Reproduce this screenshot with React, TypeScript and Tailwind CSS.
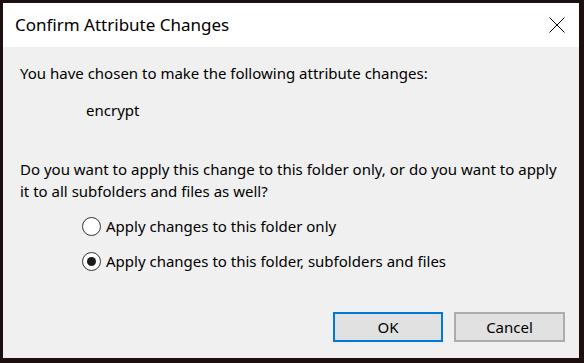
import { useState } from "react";

const font = { fontFamily: '"Noto Sans", "Liberation Sans", sans-serif' };

function Radio({ checked }: { checked: boolean }) {
  return (
    <span className="flex h-[19px] w-[19px] shrink-0 items-center justify-center rounded-full border border-[#333333] bg-white">
      {checked ? <span className="h-[9px] w-[9px] rounded-full bg-[#1a1a1a]" /> : null}
    </span>
  );
}

export default function App() {
  const [choice, setChoice] = useState<"folder" | "all">("all");

  return (
    <div
      className="flex h-[363px] w-[584px] flex-col border-t-[3px] border-r-[5px] border-b-[5px] border-l-[3px] border-[#1c0f10] text-black"
      style={font}
    >
      <div className="flex h-[44px] shrink-0 items-center justify-between bg-white pl-[12px] pr-[14px]">
        <span className="text-[17px]">Confirm Attribute Changes</span>
        <svg width="16" height="16" viewBox="0 0 16 16" className="text-black">
          <path d="M0.5 0.5 L15.5 15.5 M15.5 0.5 L0.5 15.5" stroke="currentColor" strokeWidth="1" />
        </svg>
      </div>

      <div className="flex flex-1 flex-col bg-[#f0f0f0] pt-[15px] pr-[14px] pl-[17px] text-[15px] leading-[22px]">
        <p>You have chosen to make the following attribute changes:</p>
        <p className="mt-[15px] pl-[66px]">encrypt</p>

        <p className="mt-[37px]">
          Do you want to apply this change to this folder only, or do you want to apply
          <br />
          it to all subfolders and files as well?
        </p>

        <div className="mt-[13px] flex flex-col gap-[13px] pl-[62px]">
          <label className="flex items-center gap-[5px]" onClick={() => setChoice("folder")}>
            <Radio checked={choice === "folder"} />
            <span>Apply changes to this folder only</span>
          </label>
          <label className="flex items-center gap-[5px]" onClick={() => setChoice("all")}>
            <Radio checked={choice === "all"} />
            <span>Apply changes to this folder, subfolders and files</span>
          </label>
        </div>

        <div className="mt-auto mb-[16px] flex justify-end gap-[11px]">
          <button className="h-[30px] w-[110px] border-2 border-[#0078d7] bg-[#e1e1e1] text-[15px]">
            OK
          </button>
          <button className="h-[30px] w-[111px] border-2 border-[#adadad] bg-[#e1e1e1] text-[15px]">
            Cancel
          </button>
        </div>
      </div>
    </div>
  );
}
